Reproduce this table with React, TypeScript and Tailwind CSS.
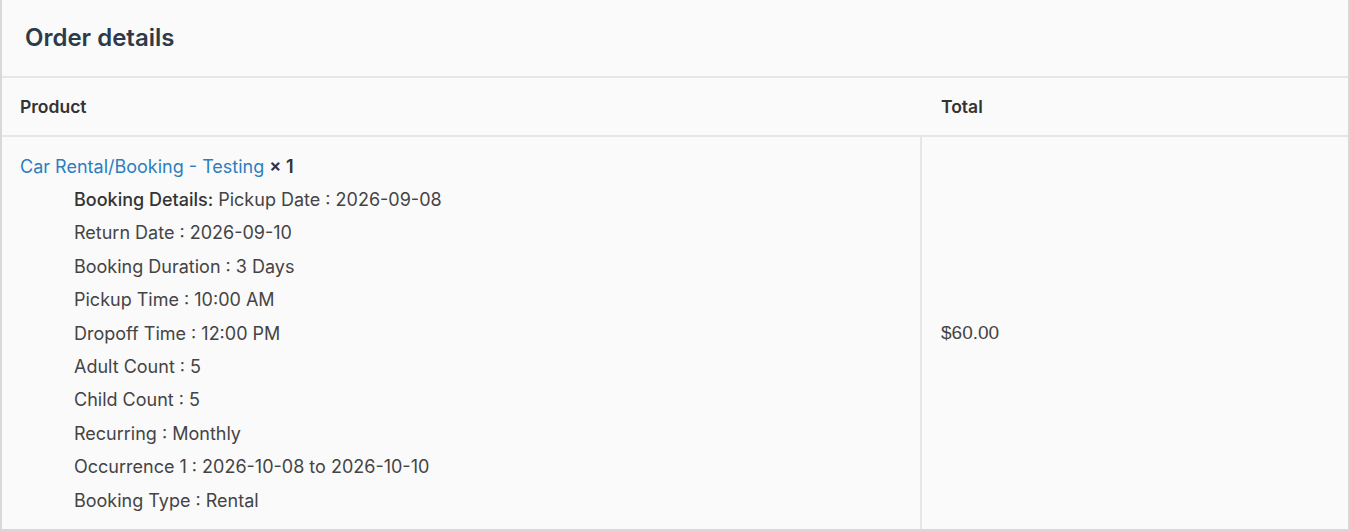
import React from 'react';

const details: string[] = [
  'Return Date : 2026-09-10',
  'Booking Duration : 3 Days',
  'Pickup Time : 10:00 AM',
  'Dropoff Time : 12:00 PM',
  'Adult Count : 5',
  'Child Count : 5',
  'Recurring : Monthly',
  'Occurrence 1 : 2026-10-08 to 2026-10-10',
  'Booking Type : Rental',
];

const App: React.FC = () => {
  return (
    <div className="h-[531px] w-[1350px] bg-white font-['Inter',sans-serif]">
      <div className="flex h-[531px] flex-col border-2 border-t-0 border-[#d8d8d8] bg-[#fafafa]">
        <div className="flex h-[78px] items-center border-b-2 border-[#e6e6e6] px-[23px]">
          <h2 className="text-[24px] font-semibold text-[#2c3a4b]">Order details</h2>
        </div>
        <div className="grid flex-1 grid-cols-[920px_1fr] grid-rows-[59px_1fr] text-[#333]">
          <div className="flex items-center border-b-2 border-[#e6e6e6] px-[18px] pt-[2px] text-[17.5px] font-semibold">
            Product
          </div>
          <div className="flex items-center border-b-2 border-[#e6e6e6] px-[19px] pt-[2px] text-[17.5px] font-semibold">
            Total
          </div>
          <div className="border-r-2 border-[#e6e6e6] px-[18px] pt-[19px] text-[18px]">
            <div className="leading-[22px]">
              <a className="text-[#2b7fc0]">Car Rental/Booking - Testing</a>{' '}
              <strong className="font-semibold text-[#333]">× 1</strong>
            </div>
            <ul className="mt-[5px] pl-[54px] leading-[33.4px] text-[#444]">
              <li>
                <strong className="font-medium text-[#333]">Booking Details:</strong> Pickup Date : 2026-09-08
              </li>
              {details.map((d) => (
                <li key={d}>{d}</li>
              ))}
            </ul>
          </div>
          <div className="flex items-center px-[19px] font-['Liberation_Sans',sans-serif] text-[19px] text-[#444]">
            $60.00
          </div>
        </div>
      </div>
    </div>
  );
};

export default App;
